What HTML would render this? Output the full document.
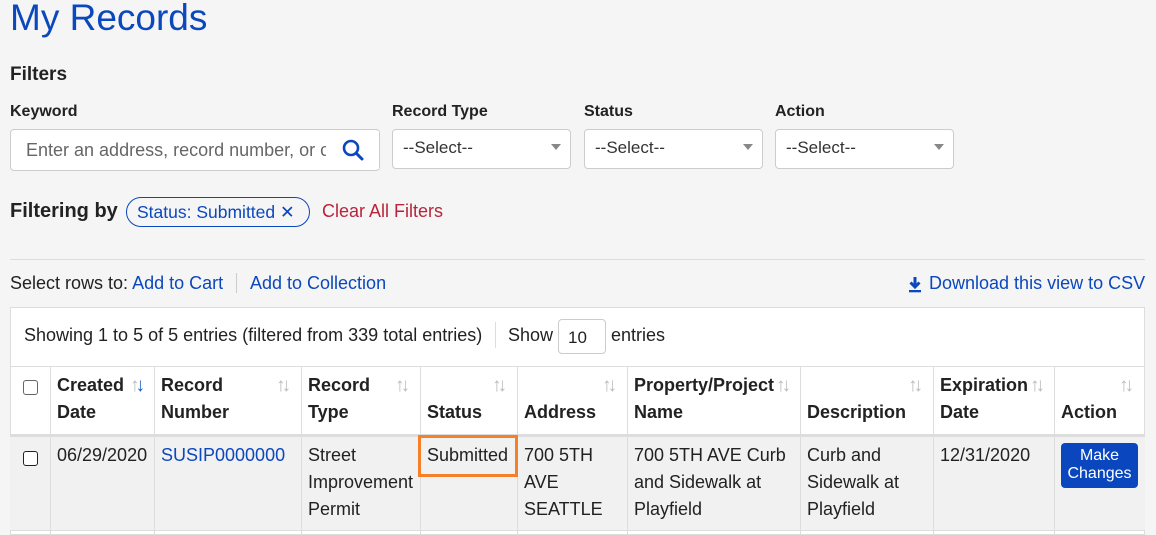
<!DOCTYPE html>
<html><head><meta charset="utf-8"><style>
*{box-sizing:border-box;margin:0;padding:0}
body{width:1156px;height:535px;overflow:hidden;background:#f5f5f5;font-family:"Liberation Sans",Arial,sans-serif;color:#222;position:relative}
.a{position:absolute;white-space:nowrap}
.lnk{color:#0b48bd}
.b{font-weight:bold}
.box{position:absolute;background:#fff;border:1px solid #ccc;border-radius:4px}
.sel{font-size:17px;color:#333;padding:8px 10px}
.caret{position:absolute;right:9px;top:14px;width:0;height:0;border-left:5px solid transparent;border-right:5px solid transparent;border-top:6px solid #888}
.v{position:absolute;top:366px;height:169px;width:1px;background:#ddd}
.h{font-size:18px;font-weight:bold;line-height:27px}
.c{font-size:18px;line-height:27px}
.sort{position:absolute;font-size:19px;color:#bbb;letter-spacing:-4px}
</style></head><body>
<div class="a lnk" style="left:10px;top:-3px;font-size:37px">My Records</div>
<div class="a b" style="left:10px;top:64px;font-size:19px">Filters</div>
<div class="a b" style="left:10px;top:103px;font-size:16px">Keyword</div>
<div class="a b" style="left:392px;top:103px;font-size:16px">Record Type</div>
<div class="a b" style="left:584px;top:103px;font-size:16px">Status</div>
<div class="a b" style="left:775px;top:103px;font-size:16px">Action</div>
<div class="box" style="left:10px;top:129px;width:370px;height:42px"><div class="a" style="left:15px;top:10px;font-size:18px;color:#666;width:300px;overflow:hidden">Enter an address, record number, or c</div>
<div class="a" style="left:318px;top:1px;width:50px;height:38px;background:#fff"></div>
<svg class="a" style="left:330px;top:8px" width="26" height="26" viewBox="0 0 26 26"><circle cx="10" cy="10" r="7" fill="none" stroke="#0b48bd" stroke-width="2.6"/><path d="M15 15l6 6" stroke="#0b48bd" stroke-width="3" stroke-linecap="round"/></svg></div>
<div class="box sel" style="left:392px;top:129px;width:179px;height:40px">--Select--<span class="caret"></span></div>
<div class="box sel" style="left:584px;top:129px;width:179px;height:40px">--Select--<span class="caret"></span></div>
<div class="box sel" style="left:775px;top:129px;width:179px;height:40px">--Select--<span class="caret"></span></div>
<div class="a b" style="left:10px;top:200px;font-size:20px">Filtering by</div>
<div class="a lnk" style="left:126px;top:197px;height:30px;width:184px;border:1px solid #0b48bd;border-radius:15px;font-size:17.5px;padding:4px 0 0 10px">Status: Submitted ✕</div>
<div class="a" style="left:322px;top:201px;font-size:18px;color:#b8243b">Clear All Filters</div>
<div class="a" style="left:10px;top:259px;width:1135px;height:1px;background:#ddd"></div>
<div class="a" style="left:10px;top:273px;font-size:18px">Select rows to: <span class="lnk">Add to Cart</span></div>
<div class="a" style="left:236px;top:273px;width:1px;height:20px;background:#ccc"></div>
<div class="a lnk" style="left:250px;top:273px;font-size:18px">Add to Collection</div>
<svg class="a" style="left:908px;top:276px" width="14" height="17" viewBox="0 0 14 17"><path d="M7 1v9M2.5 6.5L7 11l4.5-4.5" stroke="#0b48bd" stroke-width="3" fill="none"/><rect x="1" y="14" width="12" height="2.3" fill="#0b48bd"/></svg>
<div class="a lnk" style="left:929px;top:273px;font-size:18px">Download this view to CSV</div>
<div class="a" style="left:10px;top:307px;width:1135px;height:228px;background:#fff;border:1px solid #ddd"></div>
<div class="a" style="left:24px;top:325px;font-size:18px">Showing 1 to 5 of 5 entries (filtered from 339 total entries)</div>
<div class="a" style="left:495px;top:322px;width:1px;height:26px;background:#ddd"></div>
<div class="a" style="left:508px;top:325px;font-size:18px">Show</div>
<div class="box" style="left:558px;top:319px;width:48px;height:35px;font-size:17px;padding:8px 0 0 9px">10</div>
<div class="a" style="left:611px;top:325px;font-size:18px">entries</div>
<div class="a" style="left:10px;top:366px;width:1135px;height:1px;background:#ddd"></div>
<div class="a" style="left:10px;top:434px;width:1135px;height:3px;background:#ddd"></div>
<div class="a" style="left:10px;top:437px;width:1135px;height:93px;background:#f1f1f1"></div>
<div class="a" style="left:10px;top:530px;width:1135px;height:1px;background:#ddd"></div>
<div class="v" style="left:50px"></div><div class="v" style="left:154px"></div><div class="v" style="left:301px"></div><div class="v" style="left:420px"></div><div class="v" style="left:517px"></div><div class="v" style="left:627px"></div><div class="v" style="left:800px"></div><div class="v" style="left:933px"></div><div class="v" style="left:1054px"></div>
<div class="a" style="left:23px;top:380px;width:15px;height:15px;border:1.5px solid #666;border-radius:3px;background:#fff"></div>
<div class="a" style="left:23px;top:451px;width:15px;height:15px;border:1.5px solid #222;border-radius:3px;background:#fff"></div>
<div class="a h" style="left:57px;top:372px">Created<br>Date</div>
<div class="a h" style="left:161px;top:372px">Record<br>Number</div>
<div class="a h" style="left:308px;top:372px">Record<br>Type</div>
<div class="a h" style="left:427px;top:399px">Status</div>
<div class="a h" style="left:524px;top:399px">Address</div>
<div class="a h" style="left:634px;top:372px">Property/Project<br>Name</div>
<div class="a h" style="left:807px;top:399px">Description</div>
<div class="a h" style="left:940px;top:372px">Expiration<br>Date</div>
<div class="a h" style="left:1061px;top:399px">Action</div>
<div class="sort" style="left:130px;top:375px"><span style="color:#bbb">↑</span><span style="color:#1f5bbf">↓</span></div>
<div class="sort" style="left:276px;top:375px">↑↓</div>
<div class="sort" style="left:395px;top:375px">↑↓</div>
<div class="sort" style="left:492px;top:375px">↑↓</div>
<div class="sort" style="left:602px;top:375px">↑↓</div>
<div class="sort" style="left:776px;top:375px">↑↓</div>
<div class="sort" style="left:908px;top:375px">↑↓</div>
<div class="sort" style="left:1030px;top:375px">↑↓</div>
<div class="sort" style="left:1119px;top:375px">↑↓</div>
<div class="a c" style="left:57px;top:442px">06/29/2020</div>
<div class="a c lnk" style="left:161px;top:442px">SUSIP0000000</div>
<div class="a c" style="left:308px;top:442px">Street<br>Improvement<br>Permit</div>
<div class="a" style="left:418px;top:435px;width:100px;height:42px;border:3px solid #f6802a"></div>
<div class="a c" style="left:427px;top:442px">Submitted</div>
<div class="a c" style="left:524px;top:442px">700 5TH<br>AVE<br>SEATTLE</div>
<div class="a c" style="left:634px;top:442px">700 5TH AVE Curb<br>and Sidewalk at<br>Playfield</div>
<div class="a c" style="left:807px;top:442px">Curb and<br>Sidewalk at<br>Playfield</div>
<div class="a c" style="left:940px;top:442px">12/31/2020</div>
<div class="a" style="left:1061px;top:443px;width:77px;height:45px;background:#0a47bf;border-radius:4px;color:#fff;font-size:16px;line-height:18px;text-align:center;padding-top:4px">Make<br>Changes</div>
</body></html>
